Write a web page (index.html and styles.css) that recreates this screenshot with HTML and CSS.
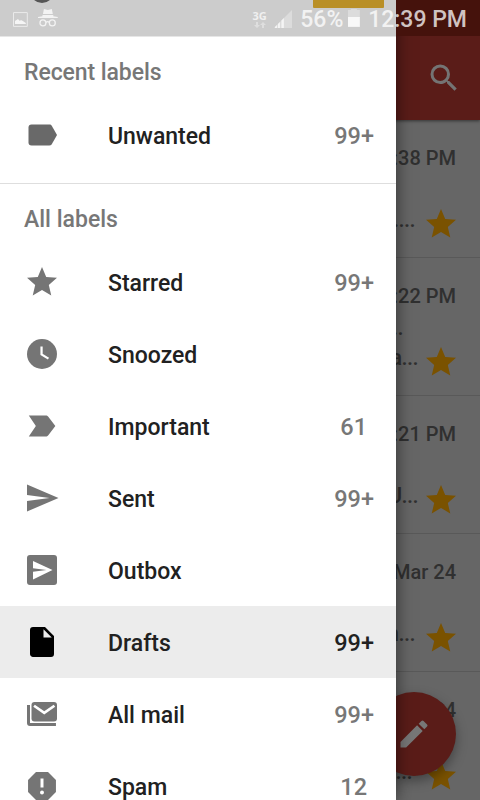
FILE: index.html
```html
<!DOCTYPE html>
<html lang="en">
<head>
<meta charset="utf-8">
<title>Mail labels</title>
<link rel="stylesheet" href="styles.css">
</head>
<body>
<svg width="0" height="0" class="defs"><symbol id="star" viewBox="0 0 24 24"><path d="M12 17.27 18.18 21l-1.64-7.03L22 9.24l-7.19-.61L12 2 9.19 8.63 2 9.24l5.46 4.73L5.82 21z"/></symbol></svg>
<div class="screen">
  <div class="inbox">
    <header class="appbar"><svg class="search" viewBox="0 0 24 24"><path d="M15.5 14h-.79l-.28-.27A6.47 6.47 0 0 0 16 9.5 6.5 6.5 0 1 0 9.5 16c1.61 0 3.09-.59 4.23-1.57l.27.28v.79l5 4.99L20.49 19zm-6 0a4.5 4.5 0 1 1 0-9 4.5 4.5 0 0 1 0 9z"/></svg></header>
    <article class="mail"><time>12:38 PM</time><p class="snip end-a">....</p><svg class="fav"><use href="#star"/></svg></article>
    <article class="mail"><time>12:22 PM</time><p class="subject">...</p><p class="snip end-b">a...</p><svg class="fav"><use href="#star"/></svg></article>
    <article class="mail"><time>12:21 PM</time><p class="snip end-b">U...</p><svg class="fav"><use href="#star"/></svg></article>
    <article class="mail"><time>Mar 24</time><p class="snip end-a">n...</p><svg class="fav"><use href="#star"/></svg></article>
    <article class="mail"><time>Mar 24</time><p class="snip end-c">...</p><svg class="fav"><use href="#star"/></svg></article>
    <button class="fab" aria-label="Compose"><svg viewBox="0 0 24 24"><path d="M3 17.25V21h3.75L17.81 9.94l-3.75-3.75zM20.71 7.04a1 1 0 0 0 0-1.41l-2.34-2.34a1 1 0 0 0-1.41 0l-1.83 1.83 3.75 3.75z"/></svg></button>
  </div>
  <nav class="drawer">
    <h2 class="first">Recent labels</h2>
    <a class="row recent"><svg viewBox="0 0 24 24"><path d="M17 5H5a2 2 0 0 0-2 2v10a2 2 0 0 0 2 2h12c.6 0 1.200-.3 1.500-.8L22 12l-3.500-6.200c-.3-.5-.9-.8-1.500-.8z"/></svg><span>Unwanted</span><b>99+</b></a>
    <h2 class="all">All labels</h2>
    <a class="row"><svg><use href="#star"/></svg><span>Starred</span><b>99+</b></a>
    <a class="row"><svg viewBox="0 0 24 24"><circle cx="12" cy="12" r="10"/><path class="hand" d="M11.700 7v5.300l4.600 2.800"/></svg><span>Snoozed</span></a>
    <a class="row"><svg viewBox="0 0 24 24"><path d="M3.200 19l4.700-7-4.700-7h11.300c.7 0 1.300.3 1.700.9l4.700 6.100-4.700 6.100c-.4.6-1 .9-1.700.9z"/></svg><span>Important</span><b class="two">61</b></a>
    <a class="row"><svg viewBox="0 0 24 24"><path d="M2 21l21-9L2 3v7l15 2-15 2z"/></svg><span>Sent</span><b>99+</b></a>
    <a class="row"><svg viewBox="0 0 24 24"><rect x="2" y="2" width="20" height="20" rx="2"/><path class="cut" d="M6 18.300l13-6.300L6 6v4.800l9 1.200-9 1.200z"/></svg><span>Outbox</span></a>
    <a class="row active"><svg viewBox="0 0 24 24"><path fill-rule="evenodd" d="M6 2a2 2 0 0 0-2 2v16c0 1.100.9 2 2 2h12a2 2 0 0 0 2-2V8l-6-6zm7 1.500L18.500 9H13z"/></svg><span>Drafts</span><b>99+</b></a>
    <a class="row"><svg viewBox="0 0 24 24"><path d="M2 6h2v12h17.300v2H4a2 2 0 0 1-2-2z"/><rect x="5" y="4" width="17" height="13" rx="2"/><path class="flap" d="M6.700 6.500l6.800 4.800 6.800-4.800"/></svg><span>All mail</span><b>99+</b></a>
    <a class="row"><svg viewBox="0 0 24 24"><path d="M16 2.700H8L2.700 8v8L8 21.300h8l5.300-5.300V8z"/><path class="cut" d="M11 7h2v6h-2z"/><circle class="cut" cx="12" cy="16.300" r="1.300"/></svg><span>Spam</span><b class="two">12</b></a>
  </nav>
  <div class="statusbar">
    <i class="avatar"></i><i class="banner"></i>
    <svg class="pic" viewBox="0 0 15 15"><path fill="none" stroke="#ebebeb" d="M.5.5h14v14H.5z"/><path fill="#f5f5f5" d="M2 12V9l3-2 2 2 1-1 2 1 3 2v1z"/></svg>
    <svg class="incog" viewBox="0 0 20 18"><path fill="#f3f3f3" d="M6 0l4 1 4-1 1 5H5zM4.500 6h11v1.200L20 8v1H0V8l4.500-.8z"/><g fill="none" stroke="#f3f3f3" stroke-width="1.300"><circle cx="5" cy="14" r="3"/><circle cx="14.500" cy="14" r="3"/><path d="M8 13.500q1.800-1.500 3.500 0"/></g></svg>
    <div class="net"><span>3G</span><svg viewBox="0 0 12 6"><path fill="#dedede" d="M2 0h2v3h2L3 6 0 3h2zM8 6h2V3h2L9 0 6 3h2z"/></svg></div>
    <svg class="signal" viewBox="0 0 19 19"><path fill="#dcdcdc" d="M0 19L19 0v19z"/><path fill="#f4f4f4" d="M1 18v1h2v-3zM4 15v4h2v-6zM7.500 11.500V19H10V9z"/></svg>
    <span class="pct">56%</span>
    <svg class="batt" viewBox="0 0 12 18"><path fill="#dcdcdc" d="M3 0h6v1h3v8H0V1h3z"/><path fill="#f8f8f8" d="M0 8h12v10H0z"/></svg>
    <span class="clock">12:39 PM</span>
  </div>
</div>
</body>
</html>
```
FILE: styles.css
```css
* { box-sizing: border-box; }
body { margin: 0; font-family: Roboto, "Noto Sans", sans-serif; font-weight: 500; }
.defs { position: absolute; }
.screen { position: relative; width: 480px; height: 800px; overflow: hidden; background: #666; }
.inbox { position: relative; height: 800px; padding-top: 36px; overflow: hidden; }
.appbar { height: 84px; background: #5a1c18; display: flex; align-items: center; justify-content: flex-end; padding-right: 18px; box-shadow: 0 1px 3px rgba(0,0,0,.5); position: relative; }
.search { width: 36px; height: 36px; fill: #747474; }
.mail { position: relative; height: 138px; border-bottom: 1px solid #595959; padding: 25px 24px 0; color: #303030; }
.mail time { display: block; text-align: right; font-size: 20px; line-height: 26px; white-space: nowrap; }
.mail p { position: absolute; margin: 0; font-size: 22px; line-height: 26px; letter-spacing: -.6px; white-space: nowrap; }
.mail .snip { top: 87px; right: 65px; }
.mail .end-b { right: 62px; }
.mail .end-c { right: 68px; }
.mail .subject { top: 57px; right: 77px; }
.fav { position: absolute; right: 21px; top: 85.5px; width: 36px; height: 36px; fill: #7a5200; }
.fab { position: absolute; left: 372px; top: 692px; width: 84px; height: 84px; padding: 0; border: 0; border-radius: 50%; background: #5a1c18; display: grid; place-items: center; box-shadow: 0 5px 12px rgba(0,0,0,.35); }
.fab svg { width: 36px; height: 36px; fill: #777; }
.drawer { position: absolute; left: 0; top: 0; width: 396px; height: 800px; padding-top: 36px; background: #fff; overflow: hidden; box-shadow: 0 0 16px rgba(0,0,0,.55); }
.drawer h2 { margin: 0; height: 63px; padding: 22px 24px 0; font-size: 23px; line-height: 28px; font-weight: 500; color: #777; }
.drawer .first { padding-top: 23px; letter-spacing: -.08px; }
.drawer .all { border-top: 1px solid #dedede; }
.row { height: 72px; display: flex; align-items: center; padding: 0 22px 0 24px; font-size: 23px; color: #212121; }
.recent { margin-bottom: 12px; }
.row svg { width: 36px; height: 36px; fill: #757575; }
.recent svg { fill: #696969; }
.row span { flex: 1; margin-left: 48px; padding-top: 2px; }
.row b { font-size: 23.5px; font-weight: 500; color: #777; padding-top: 2px; }
.row .two { margin-right: 7px; }
.row.active { background: #ececec; }
.row.active svg { fill: #000; }
.row.active b { color: #212121; }
.row .cut { fill: #fff; }
.row .hand, .row .flap { fill: none; stroke: #fff; stroke-width: 1.5; }
.row .flap { stroke-width: 1.8; }
.statusbar { position: absolute; left: 0; top: 0; width: 480px; height: 36px; display: flex; align-items: center; padding: 2px 13px 0; background: linear-gradient(90deg, #ccc 396px, #45120c 396px); color: rgba(255,255,255,.76); }
.statusbar::after { content: ""; position: absolute; left: 0; top: 36px; width: 396px; height: 1px; background: #e6e6e6; }
.avatar { position: absolute; left: 30px; top: -21px; width: 24px; height: 24px; border-radius: 50%; background: #555; }
.banner { position: absolute; left: 313px; top: 0; width: 71px; height: 8px; background: #b98f26; border-radius: 0 0 1px 1px; }
.pic { width: 15px; height: 15px; }
.incog { width: 20px; height: 18px; margin: -2px 0 0 10px; }
.net { width: 14px; margin: -2px 0 0 195px; font: 700 11px/13px "Open Sans", sans-serif; display: flex; flex-direction: column; align-items: center; color: #f0f0f0; }
.net svg { width: 12px; height: 6px; flex: none; }
.signal { width: 19px; height: 19px; margin: -2px 0 0 7px; }
.pct { width: 42px; margin-left: 8px; font-size: 23px; }
.batt { width: 12px; height: 18px; margin: -2px 0 0 6px; }
.clock { margin-left: 8px; font-size: 23px; white-space: nowrap; }
```
